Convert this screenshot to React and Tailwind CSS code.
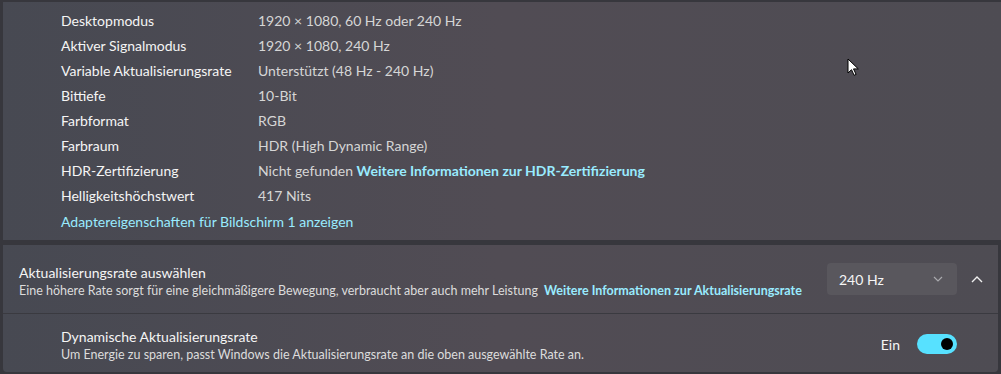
import React from "react";

const font = { fontFamily: '"Segoe UI", Lato, "Liberation Sans", sans-serif' };

const rows = [
  ["Desktopmodus", "1920 × 1080, 60 Hz oder 240 Hz"],
  ["Aktiver Signalmodus", "1920 × 1080, 240 Hz"],
  ["Variable Aktualisierungsrate", "Unterstützt (48 Hz - 240 Hz)"],
  ["Bittiefe", "10-Bit"],
  ["Farbformat", "RGB"],
  ["Farbraum", "HDR (High Dynamic Range)"],
  ["HDR-Zertifizierung", "__hdr"],
  ["Helligkeitshöchstwert", "417 Nits"],
];

export default function App() {
  return (
    <div
      className="relative w-[1001px] h-[374px] overflow-hidden bg-[#37373d] text-[#f3f3f3]"
      style={font}
    >
      <div className="flex flex-col gap-[5px] pl-[3px] pt-[2px]">
        {/* Top card */}
        <div className="h-[238px] bg-gradient-to-r from-[#474952] via-[#514c54] to-[#4e4c53] pl-[58px] pt-[6px]">
          {rows.map(([k, v]) => (
            <div key={k} className="flex h-[25px] items-center text-[14px]">
              <div className="w-[197px] text-[#f5f5f5]">{k}</div>
              <div className="text-[#d6d6d6]">
                {v === "__hdr" ? (
                  <>
                    Nicht gefunden{" "}
                    <span className="font-bold text-[#99ebff]">
                      Weitere Informationen zur HDR-Zertifizierung
                    </span>
                  </>
                ) : (
                  v
                )}
              </div>
            </div>
          ))}
          <div className="flex h-[26px] items-center text-[14px] text-[#99ebff]">
            Adaptereigenschaften für Bildschirm 1 anzeigen
          </div>
        </div>

        {/* Second card */}
        <div className="mr-[3px] rounded-b-[4px] bg-gradient-to-r from-[#474952] via-[#514c54] to-[#4e4c53]">
          <div className="flex h-[69px] items-center border-b border-[#3a3a40] pl-[16px] pr-[9px]">
            <div className="flex-1 pt-[4px]">
              <div className="text-[14px] leading-[19px] text-[#f5f5f5]">
                Aktualisierungsrate auswählen
              </div>
              <div className="text-[12.5px] leading-[18px] text-[#dcdcdc]">
                Eine höhere Rate sorgt für eine gleichmäßigere Bewegung, verbraucht aber auch mehr Leistung
                <span className="ml-[6px] font-bold text-[#99ebff]">
                  Weitere Informationen zur Aktualisierungsrate
                </span>
              </div>
            </div>
            <div className="flex h-[32px] w-[130px] items-center justify-between rounded-[4px] bg-[#59575d] pl-[12px] pr-[14px] text-[14px] text-[#f5f5f5]">
              <span>240 Hz</span>
              <svg width="10" height="6" viewBox="0 0 10 6" fill="none">
                <path d="M1 1l4 4 4-4" stroke="#a9a9ad" strokeWidth="1.2" />
              </svg>
            </div>
            <div className="ml-[8px] flex w-[24px] justify-center">
              <svg width="12" height="7" viewBox="0 0 12 7" fill="none">
                <path d="M1 6l5-5 5 5" stroke="#f0f0f0" strokeWidth="1.4" />
              </svg>
            </div>
          </div>
          <div className="flex h-[58px] items-center pl-[58px] pr-[41px]">
            <div className="flex-1 pt-[4px]">
              <div className="text-[14px] leading-[19px] text-[#f5f5f5]">
                Dynamische Aktualisierungsrate
              </div>
              <div className="text-[12.5px] leading-[18px] text-[#dcdcdc]">
                Um Energie zu sparen, passt Windows die Aktualisierungsrate an die oben ausgewählte Rate an.
              </div>
            </div>
            <span className="mr-[17px] pt-[2px] text-[14px] text-[#f5f5f5]">Ein</span>
            <div className="mt-[2px] flex h-[20px] w-[40px] items-center justify-end rounded-full bg-[#57e1ff] pr-[4px]">
              <div className="h-[12px] w-[12px] rounded-full bg-black" />
            </div>
          </div>
        </div>
      </div>

      {/* mouse cursor */}
      <svg
        className="absolute left-[847px] top-[58px]"
        width="13"
        height="19"
        viewBox="0 0 13 19"
      >
        <path
          d="M1 1v14l3.5-3.3 2.6 5.6 2-0.9-2.6-5.5h4.8z"
          fill="#fff"
          stroke="#000"
          strokeWidth="1"
        />
      </svg>
    </div>
  );
}
